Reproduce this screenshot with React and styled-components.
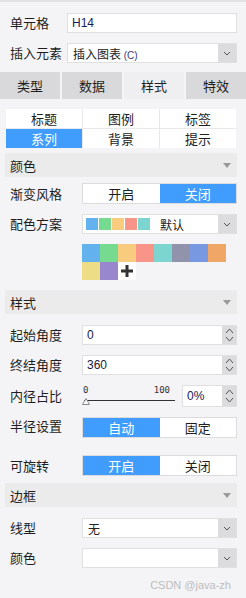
import React from 'react';
import styled, { createGlobalStyle } from 'styled-components';

const Global = createGlobalStyle`
  body {
    margin: 0;
    background: #f4f4f6;
    font-family: "Noto Sans CJK SC", "Noto Sans", sans-serif;
    font-size: 12px;
    color: #222;
  }
`;

const PALETTE = ['#63b2ee', '#76da91', '#f8cb7f', '#f89588', '#7cd6cf', '#9192ab', '#7898e1', '#efa666', '#eddd86', '#9987ce'];

function Chevron() {
  return (
    <svg width="8" height="5" viewBox="0 0 8 5">
      <path d="M1 1 L4 4 L7 1" fill="none" stroke="#555" strokeWidth="1" />
    </svg>
  );
}

function Spin() {
  return (
    <Spinner>
      <svg width="9" height="16" viewBox="0 0 9 16">
        <path d="M1 6 L4.5 2 L8 6" fill="none" stroke="#555" strokeWidth="1" />
        <path d="M1 10 L4.5 14 L8 10" fill="none" stroke="#555" strokeWidth="1" />
      </svg>
    </Spinner>
  );
}

function Select({ children }) {
  return (
    <SelectBox>
      <SelectText>{children}</SelectText>
      <DropBtn><Chevron /></DropBtn>
    </SelectBox>
  );
}

function Header({ title, top }) {
  return (
    <SectionHead $top={top}>
      <span>{title}</span>
      <svg width="8" height="5" viewBox="0 0 8 5"><path d="M0 0 L8 0 L4 5 Z" fill="#999" /></svg>
    </SectionHead>
  );
}

export default function App() {
  return (
    <Panel>
      <Global />
      <Row $top={11} $label={57}>
        <Label>单元格</Label>
        <TextInput><Navy>H14</Navy></TextInput>
      </Row>
      <Row $top={10} $label={57}>
        <Label>插入元素</Label>
        <Select>插入图表 <Small>(C)</Small></Select>
      </Row>

      <Tabs>
        <Tab>类型</Tab>
        <Tab>数据</Tab>
        <Tab $active>样式</Tab>
        <Tab>特效</Tab>
      </Tabs>

      <SubTabs>
        {['标题', '图例', '标签', '系列', '背景', '提示'].map((t) => (
          <SubTab key={t} $active={t === '系列'}>{t}</SubTab>
        ))}
      </SubTabs>

      <Header title="颜色" top={5} />
      <Row $top={6}>
        <Label>渐变风格</Label>
        <Toggle>
          <ToggleItem>开启</ToggleItem>
          <ToggleItem $on>关闭</ToggleItem>
        </Toggle>
      </Row>
      <Row $top={11}>
        <Label>配色方案</Label>
        <SelectBox>
          <Swatches>
            {PALETTE.slice(0, 5).map((c) => <Swatch key={c} $c={c} />)}
          </Swatches>
          <SelectText $indent={10}>默认</SelectText>
          <DropBtn><Chevron /></DropBtn>
        </SelectBox>
      </Row>
      <PaletteGrid>
        {PALETTE.map((c) => <Cell key={c} $c={c} />)}
        <PlusCell>
          <svg width="14" height="14" viewBox="0 0 14 14">
            <path d="M7 1 V13 M1 7 H13" stroke="#333" strokeWidth="3" />
          </svg>
        </PlusCell>
      </PaletteGrid>

      <Header title="样式" top={10} />
      <Row $top={11}>
        <Label>起始角度</Label>
        <NumBox><NumText>0</NumText><Spin /></NumBox>
      </Row>
      <Row $top={10}>
        <Label>终结角度</Label>
        <NumBox><NumText>360</NumText><Spin /></NumBox>
      </Row>
      <Row $top={10} $h={22}>
        <Label>内径占比</Label>
        <Slider>
          <Ticks><span>0</span><span>100</span></Ticks>
          <Track />
          <Thumb viewBox="0 0 8 7" width="8" height="7">
            <path d="M4 0.5 L7.5 6.5 L0.5 6.5 Z" fill="#fff" stroke="#888" strokeWidth="1" />
          </Thumb>
        </Slider>
        <SmallNum><NumText><Navy>0%</Navy></NumText><Spin /></SmallNum>
      </Row>
      <Row $top={10} $h={21} $align="flex-start">
        <Label $pt={0}>半径设置</Label>
        <Toggle>
          <ToggleItem $on>自动</ToggleItem>
          <ToggleItem>固定</ToggleItem>
        </Toggle>
      </Row>
      <Row $top={17} $h={21}>
        <Label>可旋转</Label>
        <Toggle>
          <ToggleItem $on>开启</ToggleItem>
          <ToggleItem>关闭</ToggleItem>
        </Toggle>
      </Row>

      <Header title="边框" top={7} />
      <Row $top={11}>
        <Label>线型</Label>
        <Select>无</Select>
      </Row>
      <Row $top={10}>
        <Label>颜色</Label>
        <Select></Select>
      </Row>
      <Watermark>CSDN @java-zh</Watermark>
    </Panel>
  );
}

const Panel = styled.div`
  width: 246px;
  height: 598px;
  border-top: 2px solid #e3e3e5;
  box-sizing: border-box;
  display: flex;
  flex-direction: column;
  background: #f4f4f6;
`;

const Row = styled.div`
  margin-top: ${(p) => p.$top}px;
  height: ${(p) => p.$h || 20}px;
  display: grid;
  grid-template-columns: ${(p) => p.$label || 72}px 1fr auto;
  align-items: ${(p) => p.$align || 'center'};
  padding: 0 9px 0 10px;
`;

const Label = styled.div`
  font-size: 13px;
  color: #1e1e1e;
  white-space: nowrap;
  padding-top: ${(p) => (p.$pt !== undefined ? p.$pt : 0)}px;
  line-height: 18px;
`;

const TextInput = styled.div`
  grid-column: 2 / 4;
  height: 20px;
  background: #fff;
  border: 1px solid #e0e0e0;
  box-sizing: border-box;
  display: flex;
  align-items: center;
  padding-left: 4px;
  font-family: "Liberation Sans", Arial, sans-serif;
  font-size: 12px;
`;

const Navy = styled.span`
  color: #1a1a5a;
  font-family: "Liberation Sans", Arial, sans-serif;
`;

const Small = styled.span`
  font-size: 10px;
  color: #3a3a7a;
  font-family: "Liberation Sans", Arial, sans-serif;
`;

const SelectBox = styled.div`
  grid-column: 2 / 4;
  height: 20px;
  background: #fff;
  border: 1px solid #e0e0e0;
  box-sizing: border-box;
  display: flex;
  align-items: center;
`;

const SelectText = styled.div`
  flex: 1;
  padding-left: ${(p) => p.$indent || 5}px;
  font-size: 12px;
  color: #222;
`;

const DropBtn = styled.div`
  width: 18px;
  height: 100%;
  background: #dcdcde;
  display: flex;
  align-items: center;
  justify-content: center;
`;

const Swatches = styled.div`
  display: flex;
  gap: 1px;
  padding-left: 3px;
`;

const Swatch = styled.div`
  width: 12px;
  height: 12px;
  background: ${(p) => p.$c};
`;

const Tabs = styled.div`
  margin-top: 9px;
  display: grid;
  grid-template-columns: repeat(4, 1fr);
  gap: 2px;
  height: 27px;
`;

const Tab = styled.div`
  background: ${(p) => (p.$active ? '#efeff1' : '#d9d9db')};
  display: flex;
  align-items: center;
  justify-content: center;
  font-size: 13px;
  color: #1e1e1e;
`;

const SubTabs = styled.div`
  margin: 10px 10px 0 6px;
  display: grid;
  grid-template-columns: repeat(3, 1fr);
  gap: 1px;
  background: #e8e8ea;
`;

const SubTab = styled.div`
  height: 19px;
  display: flex;
  align-items: center;
  justify-content: center;
  font-size: 13px;
  background: ${(p) => (p.$active ? '#409dfd' : '#fff')};
  color: ${(p) => (p.$active ? '#fff' : '#1e1e1e')};
`;

const SectionHead = styled.div`
  margin: ${(p) => p.$top}px 9px 0 5px;
  height: 24px;
  background: #ebebeb;
  display: flex;
  align-items: center;
  justify-content: space-between;
  padding: 0 6px 0 5px;
  font-size: 13px;
  color: #1e1e1e;
`;

const Toggle = styled.div`
  grid-column: 2 / 4;
  height: 21px;
  border: 1px solid #dcdcde;
  box-sizing: border-box;
  display: grid;
  grid-template-columns: 1fr 1fr;
  background: #fff;
`;

const ToggleItem = styled.div`
  display: flex;
  align-items: center;
  justify-content: center;
  font-size: 13px;
  background: ${(p) => (p.$on ? '#409dfd' : '#fff')};
  color: ${(p) => (p.$on ? '#fff' : '#1e1e1e')};
`;

const PaletteGrid = styled.div`
  margin: 10px 0 0 82px;
  display: grid;
  grid-template-columns: repeat(8, 18px);
  grid-auto-rows: 18px;
`;

const Cell = styled.div`
  background: ${(p) => p.$c};
`;

const PlusCell = styled.div`
  background: #fff;
  display: flex;
  align-items: center;
  justify-content: center;
`;

const NumBox = styled.div`
  grid-column: 2 / 4;
  height: 20px;
  display: flex;
  background: #fff;
  border: 1px solid #e0e0e0;
  box-sizing: border-box;
`;

const SmallNum = styled(NumBox)`
  grid-column: 3;
  width: 55px;
  height: 22px;
`;

const NumText = styled.div`
  flex: 1;
  display: flex;
  align-items: center;
  padding-left: 4px;
  font-family: "Liberation Sans", Arial, sans-serif;
  font-size: 12px;
  color: #1a1a3a;
`;

const Spinner = styled.div`
  width: 14px;
  background: #dcdcde;
  display: flex;
  align-items: center;
  justify-content: center;
`;

const Slider = styled.div`
  grid-column: 2;
  position: relative;
  height: 22px;
  margin-right: 7px;
`;

const Ticks = styled.div`
  display: flex;
  justify-content: space-between;
  padding: 0 5px 0 1px;
  font-family: "DejaVu Sans Mono", monospace;
  font-size: 9px;
  line-height: 10px;
  color: #333;
`;

const Track = styled.div`
  margin-top: 5px;
  margin-left: 2px;
  height: 1px;
  background: #333;
`;

const Thumb = styled.svg`
  position: absolute;
  left: 0;
  top: 13px;
`;

const Watermark = styled.div`
  margin-top: 11px;
  align-self: flex-end;
  margin-right: 15px;
  font-family: "Liberation Sans", Arial, sans-serif;
  font-size: 11px;
  color: #bdbdbd;
`;
